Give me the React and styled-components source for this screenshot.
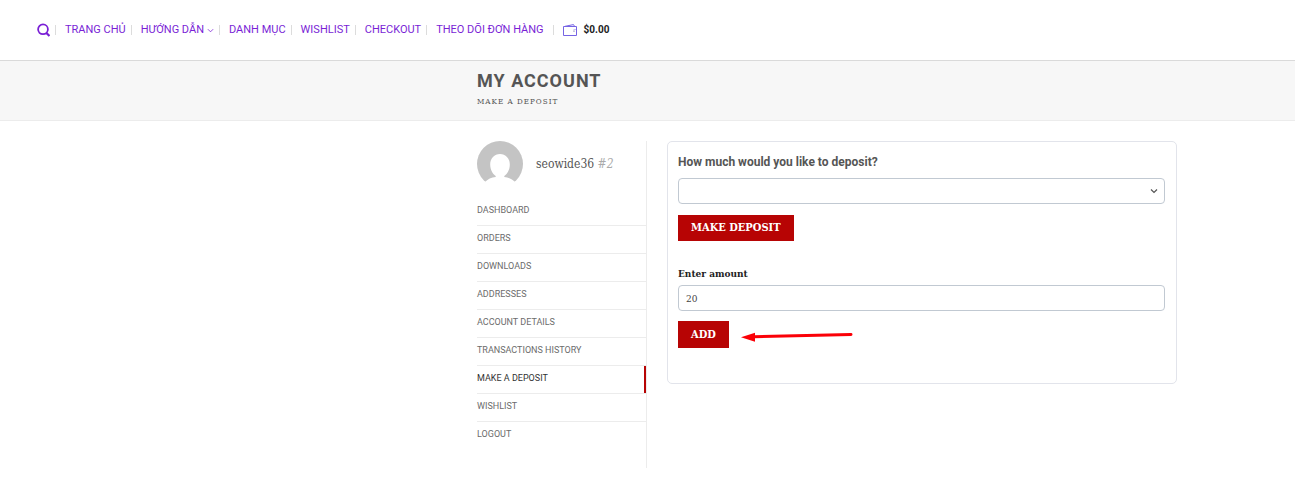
import React from "react";
import styled, { createGlobalStyle } from "styled-components";

const slab = `"DejaVu Serif Condensed", "DejaVu Serif", serif`;
const sans = `Roboto, "Liberation Sans", sans-serif`;

const GlobalStyle = createGlobalStyle`
  *, *::before, *::after { box-sizing: border-box; }
  body { margin: 0; background: #fff; color: #555; font-family: ${sans}; }
  a { color: inherit; text-decoration: none; }
  h1, h2, p, ul { margin: 0; padding: 0; }
  ul { list-style: none; }
`;

const Header = styled.header`
  display: flex;
  align-items: center;
  height: 61px;
  padding: 0 37px;
  border-bottom: 1px solid #dadada;
  color: #7a1fd6;
`;

const SearchButton = styled.button`
  display: flex;
  padding: 0;
  border: 0;
  background: none;
  color: inherit;
  cursor: pointer;
`;

const NavList = styled.ul`
  display: flex;
  align-items: center;
`;

const NavItem = styled.li`
  display: flex;
  align-items: center;
  font-size: 11px;
  line-height: 16px;
  white-space: nowrap;

  &::before {
    content: "";
    width: 1px;
    height: 10px;
    margin: 0 9px 0 5px;
    background: #dcdcdc;
  }
`;

const NavLink = styled.a`
  display: flex;
  align-items: center;
  gap: 3px;
`;

const CartItem = styled(NavItem)`
  margin-left: 4px;
`;

const CartLink = styled.a`
  display: flex;
  align-items: center;
  gap: 7px;
`;

const CartTotal = styled.strong`
  color: #222;
  font-size: 10px;
  font-weight: 700;
`;

const TitleBand = styled.div`
  height: 60px;
  padding: 9px 118px 0 477px;
  background: #f7f7f7;
  border-bottom: 1px solid #ececec;
`;

const Title = styled.h1`
  font-size: 18px;
  line-height: 22px;
  font-weight: 700;
  letter-spacing: 1px;
  text-transform: uppercase;
`;

const Subtitle = styled.p`
  margin-top: 4px;
  font-family: ${slab};
  font-size: 8px;
  line-height: 12px;
  letter-spacing: 1px;
  text-transform: uppercase;
`;

const Main = styled.main`
  display: flex;
  align-items: flex-start;
  gap: 20px;
  padding: 20px 118px 13px 477px;
`;

const Sidebar = styled.aside`
  flex: 0 0 170px;
  padding-bottom: 18px;
  border-right: 1px solid #ececec;
`;

const User = styled.div`
  display: flex;
  align-items: center;
  gap: 13px;
  height: 46px;
  margin-bottom: 11px;
  font-family: ${slab};
  font-size: 12px;
  white-space: nowrap;

  em { color: #aaa; }
`;

const MenuItem = styled.li`
  display: flex;
  height: 28px;
  border-bottom: 1px solid #ececec;

  &:last-child { border-bottom-color: transparent; }
`;

const MenuLink = styled.a`
  flex: 1;
  border-right: 2px solid ${(p) => (p.$active ? "#b70404" : "transparent")};
  color: ${(p) => (p.$active ? "#333" : "#6c6c6c")};
  font-size: 9px;
  line-height: 24px;
  text-transform: uppercase;
`;

const Card = styled.section`
  flex: 1;
  min-width: 0;
  padding: 11px 11px 35px 10px;
  border: 1px solid #e2e4eb;
  border-radius: 5px;
`;

const Form = styled.form`
  display: flex;
  flex-direction: column;
  align-items: flex-start;

  & + & { margin-top: 24px; }
`;

const DepositLabel = styled.label`
  margin-bottom: 6px;
  font-size: 12px;
  line-height: 19px;
  font-weight: 700;
`;

const AmountLabel = styled.label`
  margin-bottom: 3px;
  color: #222;
  font-family: ${slab};
  font-size: 10px;
  line-height: 17px;
  font-weight: 700;
`;

const SelectWrap = styled.div`
  display: flex;
  align-items: center;
  width: 100%;
  height: 26px;
  border: 1px solid #c1c9d2;
  border-radius: 4px;

  svg { flex: none; margin: 0 6px 0 -14px; pointer-events: none; }
`;

const Select = styled.select`
  flex: 1;
  height: 100%;
  padding: 0 16px 0 7px;
  border: 0;
  background: none;
  appearance: none;
`;

const Input = styled.input`
  width: 100%;
  height: 26px;
  padding: 0 7px;
  border: 1px solid #c1c9d2;
  border-radius: 4px;
  background: #fff;
  color: #444;
  font-family: ${slab};
  font-size: 10px;
`;

const Button = styled.button`
  height: ${(p) => (p.$tall ? 27 : 26)}px;
  padding: 0 13px;
  border: 0;
  background: #b70404;
  color: #fff;
  font-family: ${slab};
  font-size: 11px;
  line-height: 26px;
  font-weight: 700;
  text-transform: uppercase;
`;

const Actions = styled.div`
  display: flex;
  align-items: center;
  gap: 12px;
  margin-top: ${(p) => p.$gap || 11}px;
`;

const nav = ["TRANG CHỦ", "HƯỚNG DẪN", "DANH MỤC", "WISHLIST", "CHECKOUT", "THEO DÕI ĐƠN HÀNG"];
const menu = [
  "Dashboard", "Orders", "Downloads", "Addresses", "Account details",
  "Transactions history", "Make a deposit", "Wishlist", "Logout",
];

const Chevron = ({ size, stroke }) => (
  <svg width={size} height={size} viewBox="0 0 8 8" fill="none" stroke="currentColor" strokeWidth={stroke} aria-hidden="true">
    <path d="M1 2.5 4 5.5 7 2.5" />
  </svg>
);

const SearchIcon = () => (
  <svg width="13" height="14" viewBox="0 0 13 14" fill="none" stroke="currentColor" strokeWidth="1.8" aria-hidden="true">
    <circle cx="6" cy="6.300" r="4.900" />
    <path d="M9.400 9.900 12.500 13.100" strokeWidth="2.200" />
  </svg>
);

const WalletIcon = () => (
  <svg width="14" height="12" viewBox="0 0 14 12" fill="none" stroke="#7664e4" aria-hidden="true">
    <path d="M.5 2.500h13v9H.5z" />
    <path d="M2 2.300 10.500.6l1 1.700" />
    <path d="M13.500 5.500h-3" strokeWidth=".4" />
    <circle cx="11" cy="7" r=".6" fill="#39328a" stroke="none" />
  </svg>
);

const Avatar = () => (
  <svg width="46" height="46" viewBox="0 0 46 46" aria-hidden="true">
    <circle cx="23" cy="23" r="23" fill="#c4c4c4" />
    <path fill="#fff" d="M23 13c5.600 0 9.800 4.500 9.800 10.500 0 5-2.300 9.300-5.500 11.500v1c4.200.3 8 2.200 11 5.200L35 46H11l-3.300-4.800c3-3 6.800-4.900 11-5.200v-1c-3.200-2.200-5.500-6.500-5.500-11.500C13.200 17.500 17.400 13 23 13z" />
  </svg>
);

const Arrow = () => (
  <svg width="113" height="14" viewBox="0 0 113 14" aria-hidden="true">
    <path d="M13 8.700 110 6.500" stroke="#fb0007" strokeWidth="3" strokeLinecap="round" />
    <path d="M0 9.300 14 4.800v8.900z" fill="#fb0007" />
  </svg>
);

export default function App() {
  return (
    <>
      <GlobalStyle />
      <Header>
        <SearchButton type="button" aria-label="Search"><SearchIcon /></SearchButton>
        <nav>
          <NavList>
            {nav.map((label, i) => (
              <NavItem key={label}>
                <NavLink href="#">{label}{i === 1 && <Chevron size={7} stroke={0.9} />}</NavLink>
              </NavItem>
            ))}
            <CartItem>
              <CartLink href="#"><WalletIcon /><CartTotal>$0.00</CartTotal></CartLink>
            </CartItem>
          </NavList>
        </nav>
      </Header>
      <TitleBand>
        <Title>My account</Title>
        <Subtitle>Make a deposit</Subtitle>
      </TitleBand>
      <Main>
        <Sidebar>
          <User><Avatar /><span>seowide36 <em>#2</em></span></User>
          <ul>
            {menu.map((label) => (
              <MenuItem key={label}>
                <MenuLink href="#" $active={label === "Make a deposit"}>{label}</MenuLink>
              </MenuItem>
            ))}
          </ul>
        </Sidebar>
        <Card>
          <Form>
            <DepositLabel htmlFor="deposit">How much would you like to deposit?</DepositLabel>
            <SelectWrap>
              <Select id="deposit" defaultValue=""><option value="" /></Select>
              <Chevron size={8} stroke={1.2} />
            </SelectWrap>
            <Actions><Button type="button">Make deposit</Button></Actions>
          </Form>
          <Form>
            <AmountLabel htmlFor="amount">Enter amount</AmountLabel>
            <Input id="amount" type="text" inputMode="numeric" defaultValue="20" />
            <Actions $gap={10}><Button type="button" $tall>Add</Button><Arrow /></Actions>
          </Form>
        </Card>
      </Main>
    </>
  );
}
